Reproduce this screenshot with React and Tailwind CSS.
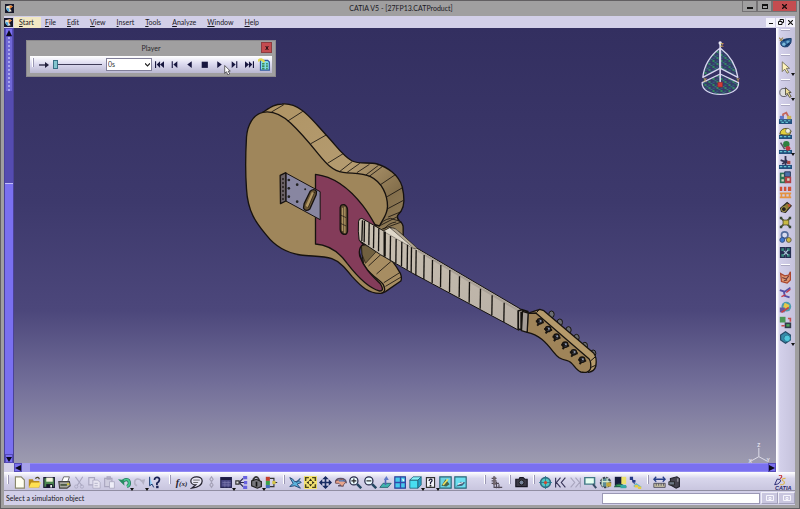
import React from "react";

const D = ({ d, c = "#1b1b35", w = 1.4, f = "none" }) => (
  <path d={d} stroke={c} strokeWidth={w} fill={f} />
);
const F = ({ d, c }) => <path d={d} fill={c} />;

const icons = {
  new: <D d="M3 1h7l4 4v10H3z" f="#fffff0" c="#8a876c" />,
  open: <><F d="M1 4h5l1 2h7v8H1z" c="#b88a1c" /><F d="M4 8h12l-3 6H1z" c="#ffe052" /><D d="M9 3q4-3 5 1" c="#4c4420" /></>,
  save: <><D d="M1 2h13v12H1z" f="#4c8750" /><F d="M4 2h8v5H4z" c="#f4f4dc" /><F d="M4 10h8v4H4z" c="#15152b" /><F d="M9 11h2v3H9z" c="#fff" /></>,
  print: <><D d="M5 6l2-5h7l-2 6" f="#fff" c="#555" w={1} /><D d="M1 7h13l1 5-4 3H2z" f="#a9a9a0" c="#444" /><F d="M3 10h8v2H3z" c="#41503a" /><F d="M11 9h3v2h-3z" c="#d3c331" /></>,
  cut: <><D d="M3 1l8 11M12 1L5 12" c="#aaa7c0" /><circle cx="4" cy="13" r="2" fill="none" stroke="#aaa7c0" /><circle cx="11" cy="13" r="2" fill="none" stroke="#aaa7c0" /></>,
  copy: <><D d="M1 2h7v9H1z" c="#aaa7c0" f="#dedced" /><D d="M6 5h6l3 3v7H6zM8 9h4M8 12h4" c="#aaa7c0" f="#e8e6f2" w={1} /></>,
  paste: <><D d="M2 3h9v10H2zM5 1h4v3H5z" c="#aaa7c0" f="#cfcddf" /><D d="M8 7h6v8H8z" c="#aaa7c0" f="#eeeef8" w={1} /></>,
  undo: <><D d="M5 8c3-5 9-5 9 1q0 3-3 4" c="#257a5f" w={4} /><D d="M5 8c3-5 9-5 9 1q0 3-3 4" c="#47c98f" w={2} /><F d="M0 4l7 1 1 7z" c="#278b61" /></>,
  redo: <><D d="M11 7c-3-5-9-4-9 1q0 3 3 4" c="#b3b1c5" w={2} /><F d="M15 4l-6 1 4 6z" c="#b3b1c5" /></>,
  help: <><D d="M2 1v11l3-2 2 4" f="#9fd6ff" c="#18376d" w={1.2} /><D d="M8 5c0-5 7-4 6 0q0 2-3 4v2" c="#172052" w={2.2} /><F d="M10 12h3v3h-3z" c="#172052" /></>,
  comment: <><D d="M15 6c0-7-14-6-14 0 0 3 3 5 6 5l-5 4c7-1 13-4 13-9z" f="#e9e7f5" c="#24222e" w={1.5} /><D d="M4 5h8M4 8h6" c="#555" w={1} /></>,
  link: <D d="M8 1l2 3-2 3-2-3zM8 8l2 3-2 3-2-3z" c="#a6a3b8" />,
  table: <><D d="M1 2h13v12H1z" f="#4d4a87" c="#272451" /><F d="M1 2h13v3H1z" c="#1c1b40" /><D d="M3 8h10M3 11h10M6 6v8M10 6v8" c="#8481b5" w={0.7} /></>,
  tree: <><D d="M5 8L10 3M5 8h6M5 8l5 5" c="#28274c" /><D d="M1 6h4v4H1z" f="#ddd" c="#333" /><F d="M10 0h5v4h-5zM11 6h4v4h-4zM10 12h5v4h-5z" c="#6762df" /></>,
  lock: <><D d="M4 7V4q4-6 7 0v3" c="#333" w={2} /><D d="M2 6l6-2 6 3v6l-5 2-7-3z" f="#77777c" c="#222" /><D d="M8 7v6" c="#111" w={2} /></>,
  graph: <><F d="M1 1h5v5H1z" c="#c33d2b" /><F d="M1 6h5v5H1z" c="#3aa04a" /><F d="M1 11h5v4H1z" c="#416bb8" /><D d="M6 3h5v10H6M11 8h4" c="#333" /><F d="M9 6h4v4H9z" c="#d4c444" /></>,
  plane: <><D d="M1 2q4 1 6 5l6-1 2 2-5 2 4 5-7-3-6 1 4-4z" c="#274b77" f="#5cb4dd" w={1.2} /><D d="M9 8l5-5" c="#2a5c86" w={1.5} /></>,
  fit: <><F d="M0 0h16v16H0z" c="#f3e170" /><D d="M2 6V2h4M10 2h4v4M2 10v4h4M10 14h4v-4" c="#49471d" w={1.8} /><F d="M8 3l2 3H6zM8 13l2-3H6zM3 8l3-2v4zM13 8l-3-2v4z" c="#2c2a18" /></>,
  pan: <><D d="M8 2v12M2 8h12" c="#182d64" w={2} /><F d="M8 0l4 4H4zM8 16l4-4H4zM0 8l4-4v8zM16 8l-4-4v8z" c="#172a60" /></>,
  rotate: <><D d="M2 8q0-5 6-5 7 0 7 6M12 12H5" c="#5d5269" w={2} /><D d="M2 6l8-2 4 4-4 5-4-4H2z" f="#e8a48c" c="#704a4d" w={1} /><D d="M6 6h7" c="#3473c5" /></>,
  zoomin: <><circle cx="6" cy="6" r="5" fill="#e9faff" stroke="#252846" strokeWidth="1.5" /><D d="M10 10l5 5" w={3} c="#234661" /><D d="M3 6h6M6 3v6" c="#222" /></>,
  zoomout: <><circle cx="6" cy="6" r="5" fill="#e9faff" stroke="#252846" strokeWidth="1.5" /><D d="M10 10l5 5" w={3} c="#234661" /><D d="M3 6h6" c="#222" /></>,
  normal: <><D d="M1 14l4-5h10l-4 5z" f="#43b5ae" c="#255b6b" w={1} /><D d="M8 11V3" c="#5264b7" w={2} /><F d="M9 0l3 5H6z" c="#607ac8" /></>,
  views: <><D d="M1 1h13v14H1z" f="#45c8ec" c="#263c97" /><D d="M8 1v14M1 8h13" c="#3447aa" w={1.6} /><F d="M10 3l3 2-2 2z" c="#fff" /></>,
  cube: <><D d="M1 5h10v10H1z" f="#48def1" c="#216177" w={1} /><D d="M1 5l4-4h10l-4 4z" f="#87f3fb" c="#216177" w={1} /><D d="M11 5l4-4v10l-4 4z" f="#259fc5" c="#216177" w={1} /></>,
  query: <><D d="M3 2h10v12H3z" f="#f4f4fa" c="#333" /><D d="M6 6q2-4 4-1 0 2-2 3v2" w={1.5} /><F d="M7 11h2v2H7z" c="#222" /></>,
  imageA: <><D d="M1 1h14v14H1z" f="#6cd4e3" c="#276577" /><F d="M3 12l5-8 5 6-4 3z" c="#496448" /><D d="M5 11l6-7" c="#f0e25d" w={2} /></>,
  imageB: <><D d="M1 1h14v14H1z" f="#6cdff0" c="#276577" /><F d="M2 13l4-3 2-3 6 1-4 4z" c="#47617c" /><D d="M5 10l6-2" c="#e4eef2" /></>,
  lines: <><D d="M5 0v14h10M2 3h6M2 6h6M2 9h9M8 7v8M11 10v5" c="#504956" w={1.4} /><F d="M4 1h3v10H4z" c="#71666d" /></>,
  camera: <><D d="M1 4h4l1-2h4l2 2h3v9H1z" f="#3b3946" c="#171622" /><circle cx="8" cy="8" r="3" fill="#77849b" stroke="#111" /></>,
  target: <><circle cx="8" cy="8" r="6" fill="#4fc6c5" stroke="#306d82" strokeWidth="2" /><D d="M8 0v16M0 8h16" c="#28758b" w={1} /><circle cx="8" cy="8" r="2" fill="#d04930" /></>,
  first: <D d="M2 2v12M8 2L3 8l5 6M14 2L9 8l5 6" c="#373458" />,
  last: <D d="M2 2l5 6-5 6M8 2l5 6-5 6M14 2v12" c="#a8a5bd" />,
  lens: <><D d="M1 2h12v8H1z" f="#e5fff1" c="#427987" w={1.8} /><D d="M11 10l4 5" c="#3a4f67" w={2.5} /></>,
  gear: <><circle cx="8" cy="8" r="6" fill="#5d8d98" stroke="#39404d" strokeWidth="2" strokeDasharray="3 1" /><D d="M4 3v10M10 2v12M4 7h9" c="#d5e9cf" /><F d="M9 8h6v5H9z" c="#c2a73c" /></>,
  scene: <><F d="M1 1h9v11H1z" c="#171c3a" /><F d="M9 1h6v9H9z" c="#eee26c" /><D d="M1 13q4-6 13 0z" f="#39a857" c="#24634a" /><F d="M8 11h7v4H8z" c="#35a9a5" /></>,
  path: <><D d="M3 2l4 8" c="#5665a2" w={1.5} /><F d="M1 1h4v4H1zM4 5h4v3H4z" c="#263b87" /><D d="M6 13l3-3 6 4" c="#6ab9c5" w={2} /><F d="M7 11h4v3H7zM11 13h4v3h-4z" c="#e6cb42" /></>,
  measure: <><D d="M1 4h14M4 1L1 4l3 3M12 1l3 3-3 3" c="#263e87" w={1.6} /><D d="M1 9h14v5H1zM4 9v3M7 9v3M10 9v3M13 9v3" f="#c8c2a6" c="#444255" w={1} /></>,
  mass: <><D d="M3 3l8-2 3 2v10l-4 2-7-4z" f="#45434f" c="#22222c" /><D d="M1 7h7v4H1z" f="#6d7885" c="#222" w={1} /><F d="M11 3h2v4h-2z" c="#8c8a94" /></>,
  workbench: <><D d="M2 8q2-5 13-5 1 6-4 10-9 2-9-5z" f="#2d6399" c="#1d3c68" w={1.2} /><circle cx="6" cy="10" r="2" fill="#7cb9d8" /><circle cx="11" cy="7" r="2" fill="#69a8ce" /><D d="M5 6q4-2 7-1M8 12q4-1 5-4" c="#12325f" /><D d="M0 2l4 4M1 6l4-4" c="#a18a52" /></>,
  arrow: <D d="M4 1v12l3-3 3 5 2-1-3-5h4z" f="#fff4bb" c="#67644c" w={1} />,
  picker: <><circle cx="6" cy="8" r="5" fill="#ddd" stroke="#45434e" /><D d="M8 2v9l2-2 3 5 2-1-3-5h3z" f="#eadb97" c="#464236" w={1} /></>,
  simA: <><F d="M0 10h16v6H0z" c="#234f7d" /><D d="M1 12h3M6 12h3M11 12h3M3 14h3M8 14h3" c="#65c3cf" /><D d="M5 9V4l4-2 3 6" c="#c4655a" w={2.2} /><F d="M1 6h5v4H1z" c="#5f76c8" /><F d="M10 6h5v4h-5z" c="#c9b352" /></>,
  simB: <><F d="M0 11h16v5H0z" c="#234f7d" /><D d="M1 13h3M6 13h3M11 13h3" c="#65c3cf" /><D d="M1 10q1-8 10-7l4 3-2 5H6z" f="#e3cf3d" c="#5c542a" w={1.2} /><circle cx="11" cy="6" r="3" fill="#f1f1dc" stroke="#555" strokeWidth=".7" /></>,
  simC: <><F d="M0 11h16v5H0z" c="#234f7d" /><D d="M1 13h3M6 13h3M11 13h3" c="#65c3cf" /><circle cx="9" cy="4" r="4" fill="#2f8142" /><circle cx="11" cy="9" r="3" fill="#bf3942" /><D d="M2 2l5 8" c="#5a5468" w={2} /></>,
  simD: <><F d="M0 11h16v5H0z" c="#234f7d" /><D d="M1 13h3M6 13h3M11 13h3" c="#65c3cf" /><D d="M2 5l11 4M8 0v11M4 10l6-5" c="#343352" w={2.2} /><F d="M10 6h4v4h-4z" c="#a54645" /></>,
  simE: <><F d="M1 2h8v13H1z" c="#2b7356" /><D d="M7 1h7v6H7z" f="#4b70a8" c="#273a5c" w={1.2} /><F d="M7 7h8v8H7z" c="#b03f43" /><F d="M3 4h3v3H3zM3 10h3v3H3zM10 9h3v3h-3z" c="#d1d6bf" /></>,
  clash: <><F d="M1 1h3v5H1zM6 1h3v5H6zM11 1h4v5h-4z" c="#cf5235" /><D d="M1 9h14M1 14h14M3 9v5M8 9v5M13 9v5" c="#e3923f" w={2} /></>,
  tube: <><D d="M2 9l8-7 5 4-7 8-5-1z" f="#8e7c32" c="#292821" w={1.5} /><circle cx="6" cy="10" r="3" fill="#24221d" stroke="#b9ac58" /><F d="M11 4h3v3h-3z" c="#c25338" /></>,
  burst: <><D d="M2 2l12 12M14 2L2 14" c="#4c5733" w={2} /><D d="M5 5h7v6H5z" f="#c8ba43" c="#55502b" w={1} /><F d="M1 1h3v3H1zM12 1h3v3h-3zM1 12h3v3H1zM12 12h3v3h-3z" c="#374633" /></>,
  rings: <><circle cx="7" cy="5" r="4" fill="#d8dbf0" stroke="#546c9d" strokeWidth="2" /><circle cx="12" cy="11" r="3" fill="#ccb744" stroke="#56513d" /><circle cx="4" cy="11" r="3" fill="#4179cf" stroke="#2d4977" /></>,
  blocks: <><D d="M2 2h5v5H2zM9 2h5v5H9zM2 9h5v5H2zM9 9h5v5H9z" f="#3b897d" c="#252f51" w={1.8} /><D d="M6 6l5 5M11 5l-5 6" c="#a9c4d6" w={1.5} /></>,
  swept: <><D d="M2 3l5 3 5-1 2-4v10l-4 4-7-2z" f="#df9670" c="#a9452d" w={1.5} /><D d="M4 8l5 2 3-4M6 12l4-1" c="#713d3c" /></>,
  trace: <><D d="M1 5l6 2 7-5M6 7l1 5 6 2" c="#5450a6" w={2.2} /><D d="M9 8l5-4M3 13l5-2" c="#c2384c" w={1.8} /></>,
  ball: <><circle cx="9" cy="7" r="6" fill="#4d9bad" /><F d="M7 2l6 3-2 5-6-2z" c="#e6c947" /><F d="M1 8h6v6H1z" c="#6658a1" /><D d="M3 14l9-6" c="#c84444" w={2} /></>,
  swap: <><F d="M1 1h7v7H1z" c="#4d9755" /><F d="M7 8h8v7H7z" c="#333c4a" /><D d="M3 12h4M11 3h3v4" c="#c44d4b" w={2} /><F d="M9 10h4v3H9z" c="#4aa45b" /></>,
  product: <><D d="M2 5l6-4 6 4v6l-6 4-6-4z" f="#378ba9" c="#274d69" w={1.5} /><circle cx="10" cy="9" r="4" fill="#52c8dc" stroke="#276c88" /></>,
  pFirst: <F d="M0 2h2v12H0zM9 2v12L3 8zM16 2v12L9 8z" c="#17163e" />,
  pPrev: <F d="M3 2h2v12H3zM13 2v12L6 8z" c="#17163e" />,
  pBack: <F d="M12 2v12L4 8z" c="#17163e" />,
  pStop: <F d="M3 3h11v11H3z" c="#17163e" />,
  pPlay: <F d="M4 2v12l8-6z" c="#17163e" />,
  pNext: <F d="M3 2v12l7-6zM11 2h2v12h-2z" c="#17163e" />,
  pLast: <F d="M0 2v12l7-6zM7 2v12l6-6zM14 2h2v12h-2z" c="#17163e" />,
  params: <><D d="M3 3h9l2 2v10H3z" f="#7fdce8" c="#34589d" /><D d="M5 7h3M10 7h2M5 10h3M10 10h2M5 13h3M10 13h2" c="#3f8c56" w={2} /><D d="M0 4q4-5 8 1" c="#e1d64f" w={3} /></>,
};

const small = "h-[9px] w-[9px]";
const regular = "h-[13px] w-[13px]";

function Tool({ name, label, menu, size = regular }) {
  return (
    <button type="button" aria-label={label || name} className="relative flex h-[15px] w-[15px] shrink-0 items-center justify-center">
      {name === "formula" ? (
        <span className="font-['Liberation_Serif',serif] text-[10px] leading-none font-bold text-[#22202e] italic">
          f<span className="text-[7px]">(x)</span>
        </span>
      ) : (
        <svg viewBox="0 0 16 16" className={size}>{icons[name]}</svg>
      )}
      {menu && (
        <svg viewBox="0 0 4 3" className="absolute -right-[2px] -bottom-[1px] h-[3px] w-[4px]"><path d="M0 0h4L2 3z" fill="#111" /></svg>
      )}
    </button>
  );
}

const Grip = ({ className = "" }) => (
  <span className={"h-[9px] w-[2px] shrink-0 self-start border-r border-[#9b98b4] bg-white " + className} />
);
const Divider = () => <span className="mx-auto h-[2px] w-[9px] shrink-0 border-b border-[#aaa7c1] bg-white" />;

const bottomGroups = [
  { gap: "ml-[3px] mr-[7px]", items: ["new", "open", "save", "print", "cut", "copy", "paste", "undo*", "redo*", "help"] },
  { gap: "mr-1", items: ["formula", "comment", "link", "table*", "tree", "lock*", "graph"] },
  { gap: "mr-[16px]", items: ["plane", "fit", "pan", "rotate", "zoomin", "zoomout", "normal", "views", "cube*", "query*", "imageA", "imageB"] },
  { gap: "mr-[5px]", items: ["lines"] },
  { gap: "mr-1", items: ["camera"] },
  { gap: "mr-1", items: ["target", "first", "last", "lens", "gear", "scene", "path"] },
  { gap: "", items: ["measure", "mass"] },
];
const sideGroups = [
  ["workbench"],
  ["arrow*"],
  ["picker*"],
  ["simA", "simB", "simC*", "simD", "simE", "clash", "tube", "burst", "rings", "blocks"],
  ["swept", "trace", "ball", "swap", "product*"],
];
const tool = (s) => <Tool key={s} name={s.replace("*", "")} menu={s.endsWith("*")} />;

function AppIcon() {
  return (
    <svg viewBox="0 0 16 16" className="h-[9px] w-[9px] shrink-0">
      <path d="M0 0h16v16H0z" fill="#17182b" />
      <path d="M2 4l9-2 3 3-6 2 4 6-5 1-5-5z" fill="#e8e0cb" />
      <path d="M8 2l6 2-5 5z" fill="#ea832f" />
      <path d="M2 6l5 2 1 6-4-2z" fill="#4aa4dd" />
    </svg>
  );
}

const pegs = [[148, 97], [173, 120], [198, 143], [224, 167], [250, 190], [275, 212]];
const knobs = [[182, 73], [207, 97], [233, 120], [257, 143], [282, 167], [307, 190]];
const frets = [
  [42, 47, 112], [56, 54, 121], [70, 62, 130], [85, 70, 139], [104, 80, 155], [120, 93, 166], [137, 102, 174],
  [154, 110, 183], [171, 119, 194], [183, 127, 201], [197, 135, 211], [221, 150, 222], [246, 165, 234], [271, 180, 247],
  [298, 195, 262], [327, 214, 277], [357, 231, 293], [390, 251, 311], [425, 271, 330], [461, 293, 351],
];

function Model() {
  return (
    <svg viewBox="14 28 761 435" className="h-full w-full" role="img" aria-label="Guitar assembly">
      <defs>
        <linearGradient id="side" x1="0" y1="0" x2="1" y2="1">
          <stop offset="0" stopColor="#af9464" /><stop offset=".55" stopColor="#b49b70" /><stop offset=".8" stopColor="#846f4c" /><stop offset="1" stopColor="#95815c" />
        </linearGradient>
        <linearGradient id="board" x1="0" y1="0" x2="1" y2="1">
          <stop offset="0" stopColor="#c9c0b1" /><stop offset="1" stopColor="#b9b0a6" />
        </linearGradient>
        <pattern id="dots" width="24" height="18" patternUnits="userSpaceOnUse">
          <path d="M0 0h24v18H0z" fill="#363c68" />
          <path d="M1 1h4v4H1z" fill="#25e04a" /><path d="M13 10h4v4h-4z" fill="#2fd85c" />
          <path d="M13 2h3v3h-3zM2 11h3v3H2z" fill="#35859c" /><path d="M7 6h4v4H7zM19 15h4v3h-4z" fill="#2f8f86" />
        </pattern>
      </defs>

      <g transform="translate(235 95) scale(.33333)" stroke="#17120f" strokeWidth="4" strokeLinejoin="round">
        <path d="M82 52C105 37 118 27 140 27C185 22 220 62 245 90L272 120C305 155 320 181 350 198C370 208 400 201 425 207C455 216 490 240 500 275Q512 325 497 348L486 362Q484 371 492 378Q504 386 503 400V425L430 410L300 300L130 100Z" fill="url(#side)" />
        <path d="M378 452Q390 442 410 450C440 465 465 485 483 516L495 536Q500 548 496 558L450 590Q438 597 430 592L385 520Z" fill="#a78d62" />
        <path d="M378 452Q405 448 422 470L390 505Q376 480 378 452z" fill="#71603f" strokeWidth="2" />
        <path d="M82 52C115 46 145 65 166 85C195 112 220 142 247 175C270 203 290 228 323 232C355 236 379 233 405 245C440 262 456 300 456 334C456 360 440 375 432 393L370 375V450Q368 485 390 517C410 545 434 555 443 568Q455 592 435 595C400 596 378 576 350 545C330 520 314 500 289 491C260 481 225 485 195 480C145 472 115 449 94 422C65 386 37 355 33 282C29 230 30 180 33 126C36 90 52 59 82 52Z" fill="#9f865b" />
        <g strokeWidth="2.5">
          <path d="M108 51L145 29M157 78L202 49M226 146L272 120M276 205L323 176M312 230L350 200M335 232L373 205M364 233L402 208M391 240L429 211M400 245L440 215M435 269L481 238M455 305L503 277M455 342L504 316M458 366L497 350M435 391L484 366M440 402L498 381M399 513L442 473M423 537L469 497M445 563L494 532M450 574L497 546" />
          <path d="M432 393Q440 375 465 370L490 378M445 404Q458 384 482 381" fill="none" />
        </g>
        <path d="M240 238C300 245 345 284 382 332C402 358 412 378 423 397L377 372Q368 374 370 390L372 430Q373 441 384 447Q367 458 373 484C385 520 413 545 435 567Q448 589 432 588C397 578 365 544 335 505C310 470 280 450 240 447Z" fill="#843c5a" />
        <path d="M151 234L254 290V374L151 318Z" fill="#8886a1" strokeWidth="3" />
        <path d="M134 241L151 233V318L135 326Z" fill="#6b6267" />
        <path d="M140 252h5M140 264h5M140 276h5M140 288h5M140 300h5M140 312h5" strokeWidth="4" />
        <path d="M224 289Q235 279 243 289L242 299L223 342Q210 352 204 339L206 326Z" fill="#6b5634" />
        <path d="M233 293L214 335" stroke="#b29866" strokeWidth="8" />
        <path d="M238 290L218 338" strokeWidth="2" />
        <g fill="#222" stroke="none"><circle cx="160" cy="255" r="4" /><circle cx="160" cy="280" r="4" /><circle cx="160" cy="305" r="4" /><circle cx="185" cy="269" r="4" /><circle cx="185" cy="320" r="4" /><circle cx="209" cy="283" r="3" /></g>
        <path d="M314 338Q316 327 326 329Q336 334 336 345V409Q334 420 325 418Q315 414 314 403Z" fill="#5d4a30" />
        <path d="M321 338V408M328 335V414" stroke="#ad9462" strokeWidth="4" />
        <path d="M315 360l17 8M315 385l17 8" strokeWidth="2" />
      </g>

      <g transform="translate(350 205) scale(.33333)" stroke="#15120f" strokeWidth="3" strokeLinejoin="round">
        <path d="M100 78L118 68Q130 66 145 80L200 130L515 315L505 376L185 204L90 149L26 106Q22 80 24 50Q25 40 34 40Z" fill="url(#board)" />
        <path d="M100 78L118 68L195 132L188 130L104 82Z" fill="#ded7c9" strokeWidth="1" />
        <path d="M120 69Q135 68 145 80L200 130L190 130Z" fill="#b5a994" strokeWidth="1" />
        <path d="M202 137L508 319" stroke="#a9a096" strokeWidth="6" />
        {frets.map(([x, a, b]) => <path key={x} d={`M${x} ${a}L${x - 1} ${b}`} strokeWidth="4" />)}
        <path d="M102 80V154" strokeWidth="6" />
        <path d="M36 46L34 108" strokeWidth="4" />
        <path d="M503 318L513 314L532 320L530 378L503 372Z" fill="#a9a199" strokeWidth="5" />
        <path d="M512 320V374" strokeWidth="5" />
      </g>

      <g transform="translate(490 290) scale(.33333)" stroke="#17130f" strokeWidth="4" strokeLinejoin="round">
        {knobs.map(([x, y]) => (
          <g key={x}>
            <path d={`M${x - 10} ${y + 14}L${x - 2} ${y}`} strokeWidth="8" />
            <ellipse cx={x + 1} cy={y} rx="8" ry="10" fill="#6b6d72" strokeWidth="3" />
          </g>
        ))}
        <path d="M118 68L148 58L160 62L310 190Q320 202 316 228Q312 244 294 247L276 230L130 100Z" fill="#b59a6b" />
        <path d="M112 70L136 69L296 207Q303 218 300 236Q293 251 271 246C253 240 249 216 230 212C208 207 202 203 188 185C166 156 145 134 110 127Z" fill="#9f8459" />
        <path d="M138 68L145 60M300 213L315 200M302 232L317 225" strokeWidth="3" />
        <path d="M96 64L113 69L110 127L93 122Z" fill="#a69e97" />
        {pegs.map(([x, y]) => (
          <g key={x}>
            <circle cx={x} cy={y - 3} r="8" fill="#3d4351" strokeWidth="4" />
            <path d={`M${x - 12} ${y - 3}h15M${x - 2} ${y + 4}l-6 6M${x + 7} ${y}h5`} strokeWidth="6" />
            <circle cx={x + 2} cy={y - 4} r="3" fill="#8f98ac" stroke="none" />
          </g>
        ))}
      </g>

      <g transform="translate(640 0) scale(.33333)" fill="url(#dots)" stroke="#d7d5ef" strokeWidth="4" strokeLinejoin="round">
        <path d="M238 145C205 170 190 205 187 232L238 205ZM240 145C273 170 288 205 292 232L240 205Z" />
        <path d="M239 222L185 248C181 295 298 295 294 248Z" />
        <path d="M239 130V248" strokeWidth="5" />
        <circle cx="239" cy="129" r="5" fill="#eceaf8" stroke="none" />
        <path d="M232 247h14v14h-14z" fill="#d23a36" stroke="#8c2c30" strokeWidth="2" />
        <g stroke="none" fill="#c7a957" fontSize="15" fontFamily="Liberation Sans, sans-serif" fontWeight="bold">
          <text x="240" y="142">Z</text><text x="188" y="246">X</text><text x="287" y="246">Y</text>
        </g>
      </g>

      <g transform="translate(530 440) scale(.33333)" stroke="#dddce8" strokeWidth="3" fill="none">
        <path d="M685 24V50L660 64M685 50L711 64" />
        <g stroke="none" fill="#e4e3ee" fontSize="15" fontFamily="Liberation Sans, sans-serif" fontWeight="bold">
          <text x="680" y="22">Z</text><text x="654" y="68">X</text><text x="708" y="67">Y</text>
        </g>
      </g>
    </svg>
  );
}

const playerTools = [
  ["pFirst", "Jump to start"], ["pPrev", "Step backward"], ["pBack", "Play backward"], ["pStop", "Pause"],
  ["pPlay", "Play forward"], ["pNext", "Step forward"], ["pLast", "Jump to end"], ["params", "Parameters"],
];

function Player() {
  return (
    <section className="absolute top-[12px] left-[12px] w-[250px] border border-[#8b898d] bg-[#a09fa0] px-[3px] pb-[3px]">
      <header className="relative flex h-[15px] items-center justify-center">
        <h2 className="text-[7px] leading-none text-[#29272b]">Player</h2>
        <button type="button" aria-label="Close player" className="absolute top-[1px] right-0 flex h-[11px] w-[11px] items-center justify-center border border-[#8d3c40] bg-[#c44c50]">
          <svg viewBox="0 0 6 6" className="h-[4px] w-[4px]"><path d="M1 0l4 6M5 0L1 6" stroke="#231012" strokeWidth="1.5" /></svg>
        </button>
      </header>
      <div className="flex h-[17px] items-center bg-linear-to-b from-white via-[#dad8ee] to-[#b9b7d0]">
        <Grip className="mt-[2px] ml-[2px]" />
        <svg viewBox="0 0 10 6" className="mr-1 ml-[5px] h-[6px] w-[10px]"><path d="M0 3h7" stroke="#201e3a" strokeWidth="1.3" /><path d="M6 0l4 3-4 3z" fill="#201e3a" /></svg>
        <input type="range" aria-label="Time" defaultValue="0" className="h-[10px] w-[49px] appearance-none bg-transparent [&::-webkit-slider-runnable-track]:h-px [&::-webkit-slider-runnable-track]:bg-[#3f3d58] [&::-webkit-slider-thumb]:-mt-1 [&::-webkit-slider-thumb]:h-[9px] [&::-webkit-slider-thumb]:w-[5px] [&::-webkit-slider-thumb]:appearance-none [&::-webkit-slider-thumb]:border [&::-webkit-slider-thumb]:border-[#386f85] [&::-webkit-slider-thumb]:bg-[#83c4ce]" />
        <div className="relative ml-1">
          <select aria-label="Current time" className="block h-[13px] w-[46px] appearance-none border border-[#817f99] bg-white pl-[1px] text-[7px] leading-none text-[#333]">
            <option>0s</option>
          </select>
          <svg viewBox="0 0 6 4" className="pointer-events-none absolute top-[5px] right-[2px] h-[4px] w-[5px]"><path d="M0 0l3 3 3-3" stroke="#222" strokeWidth="1.4" fill="none" /></svg>
        </div>
        {playerTools.map(([n, l]) => <Tool key={n} name={n} label={l} size={n === "params" ? regular : small} />)}
      </div>
    </section>
  );
}

const Arrow = ({ d, label, className }) => (
  <button type="button" aria-label={label} className={"flex shrink-0 items-center justify-center border border-[#554bb8] bg-[#7a70ee] " + className}>
    <svg viewBox="0 0 6 6" className="h-[6px] w-[6px]"><path d={d} fill="#0c0a1c" /></svg>
  </button>
);

const winButton = "flex items-center justify-center border border-t-0 border-[#747274] ";
const mdiButton = "flex h-[9px] w-[9px] items-center justify-center bg-[#f4f3fb]";

export default function App() {
  return (
    <div className="flex h-screen min-h-[400px] flex-col overflow-hidden border border-[#625f62] bg-[#a09fa0] font-['Lato','Open_Sans',sans-serif] text-[7px] leading-none text-[#19171e]">
      <header className="grid h-[15px] shrink-0 grid-cols-[1fr_auto_1fr] items-center pr-[2px] pl-1">
        <AppIcon />
        <h1 className="text-[7px]">CATIA V5 - [27FP13.CATProduct]</h1>
        <div className="flex h-[11px] self-start justify-self-end">
          <button type="button" aria-label="Minimize" className={winButton + "w-[15px]"}><span className="mt-1 h-[2px] w-[6px] bg-[#111]" /></button>
          <button type="button" aria-label="Maximize" className={winButton + "w-[15px]"}><span className="h-[5px] w-[6px] border border-t-2 border-[#111]" /></button>
          <button type="button" aria-label="Close" className={winButton + "w-[25px] bg-[#c44c50]"}>
            <svg viewBox="0 0 6 6" className="h-[5px] w-[5px]"><path d="M0 0l6 6M6 0L0 6" stroke="#1b0c0d" strokeWidth="1.6" /></svg>
          </button>
        </div>
      </header>

      <div className="mr-1 mb-[3px] ml-[3px] flex min-h-0 flex-1 flex-col bg-[#d2cfe8]">
        <nav className="flex h-[12px] shrink-0 items-center">
          <AppIcon />
          <button type="button" className="mr-1 ml-[1px] h-[11px] w-[27px] bg-[#f2e8c4] pl-[5px] text-left"><u>S</u>tart</button>
          <div className="flex flex-1 gap-[11px]">
            {["File", "Edit", "View", "Insert", "Tools", "Analyze", "Window", "Help"].map((m) => (
              <button type="button" key={m}><u>{m[0]}</u>{m.slice(1)}</button>
            ))}
          </div>
          <div className="flex gap-[1px]">
            <button type="button" aria-label="Minimize document" className={mdiButton}><span className="mt-[3px] h-px w-[4px] bg-[#111]" /></button>
            <button type="button" aria-label="Restore document" className={mdiButton}>
              <svg viewBox="0 0 6 6" className="h-[6px] w-[6px]"><path d="M2 2V.5h3.500v3H4M.5 2.500h3.500v3H.5z" fill="none" stroke="#111" /></svg>
            </button>
            <button type="button" aria-label="Close document" className={mdiButton}>
              <svg viewBox="0 0 6 6" className="h-[5px] w-[5px]"><path d="M0 0l6 6M6 0L0 6" stroke="#111" strokeWidth="1.4" /></svg>
            </button>
          </div>
        </nav>

        <div className="flex min-h-0 flex-1">
          <div className="flex min-w-0 flex-1 flex-col">
            <div className="flex min-h-0 flex-1">
              <div className="flex w-[10px] shrink-0 flex-col border-x border-[#4a4299] bg-[#564db6]">
                <Arrow d="M3 0l3 6H0z" label="Scroll up" className="h-[9px]" />
                <div className="flex h-[146px] flex-col bg-[#554cb1]">
                  <div className="mx-[1px] h-[54px] bg-[#7068d5]"><div className="mx-auto h-full w-[2px] border-l-2 border-dotted border-[#aaa5ed]" /></div>
                </div>
                <div className="flex-1 border-t border-[#c3befa] bg-[#7a70f0]" />
                <Arrow d="M0 1h6L3 6z" label="Scroll down" className="h-[9px]" />
              </div>
              <main className="relative min-w-0 flex-1 bg-[linear-gradient(to_bottom,#332f60,#3d396c_40%,#4c477b_65%,#736f99_82%,#9d9bb0)]">
                <Model />
                <Player />
                <svg viewBox="0 0 12 18" className="pointer-events-none absolute top-[37px] left-[210px] h-[10px] w-[7px]">
                  <path d="M1 1v14l3-3 3 6 3-2-3-5h4z" fill="#fff" stroke="#222" strokeWidth="1.2" />
                </svg>
              </main>
            </div>
            <div className="flex h-[9px] shrink-0 pl-[10px]">
              <Arrow d="M0 3l6-3v6z" label="Scroll left" className="w-[8px]" />
              <div className="w-[8px] bg-[#a5a0ea]" />
              <div className="flex-1 border-y border-[#9189f3] bg-[#7a70f0]" />
              <Arrow d="M6 3L0 0v6z" label="Scroll right" className="w-[8px]" />
            </div>
          </div>
          <aside className="flex w-[19px] shrink-0 flex-col bg-linear-to-r from-white from-5% via-[#d3d0ea] via-20% to-[#c5c2dc]">
            <div className="flex flex-col gap-1 pt-[1px]">
              {sideGroups.map((g, i) => (
                <div key={i} className="flex flex-col items-center">
                  <Divider />
                  <div className="pt-1">{g.map(tool)}</div>
                </div>
              ))}
            </div>
          </aside>
        </div>

        <div className="flex h-[19px] shrink-0 items-center border-b border-[#918ea3] bg-linear-to-b from-white via-[#d8d6ec] via-35% to-[#c9c6df] pt-[3px]">
          <span className="w-[3px]" />
          {bottomGroups.map((g, i) => (
            <React.Fragment key={i}>
              <Grip />
              <div className={"flex " + (i === 0 ? "" : "ml-[3px] ") + g.gap}>{g.items.map(tool)}</div>
            </React.Fragment>
          ))}
          <svg viewBox="0 0 66 54" className="mr-[1px] ml-auto h-[15px] w-[22px]" role="img" aria-label="CATIA">
            <path d="M18 2q12-4 10 6l-6 6" stroke="#c43c3c" strokeWidth="4" fill="none" />
            <path d="M3 35L12 15q18 0 10 11Q16 34 3 35" stroke="#2b2a75" strokeWidth="3.500" fill="none" />
            <path d="M42 12Q27 12 31 20q12 5 4 13-5 4-12 1" stroke="#dbb64a" strokeWidth="4" fill="none" />
            <text x="4" y="53" fontSize="20" fontWeight="bold" fontStyle="italic" fontFamily="Liberation Sans, sans-serif" fill="#29266b">CATIA</text>
          </svg>
        </div>

        <footer className="flex h-[14px] shrink-0 items-center">
          <label htmlFor="power-input" className="flex-1 pl-[2px]">Select a simulation object</label>
          <input id="power-input" type="text" className="mr-[1px] h-[11px] w-1/5 border border-[#9b98b5] bg-white px-1 text-[7px]" />
          {["Power input mode", "Dialog"].map((l) => (
            <button type="button" key={l} aria-label={l} className="flex h-[12px] w-[17px] items-center justify-center border border-[#f0eff8] border-r-[#a3a0bb] border-b-[#a3a0bb] bg-[#c9c6df]">
              <svg viewBox="0 0 8 6" className="h-[6px] w-[8px]"><path d="M.5.5h7v5h-7zM3 2.500h2v2H3z" fill="none" stroke="#f6f5fc" /></svg>
            </button>
          ))}
        </footer>
      </div>
    </div>
  );
}
